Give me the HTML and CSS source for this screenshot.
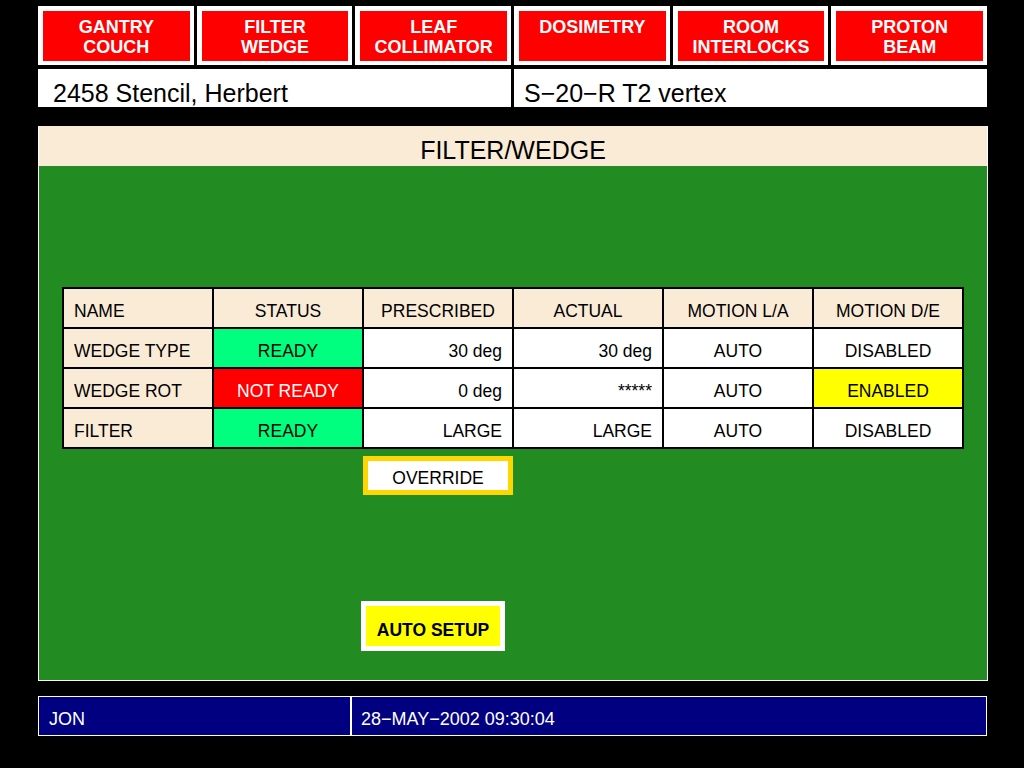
FILE: index.html
```html
<!DOCTYPE html>
<html lang="en">
<head>
  <meta charset="UTF-8" />
  <title>Filter/Wedge</title>
  <link rel="stylesheet" href="styles.css">
</head>
<body>
  <div class="screen">

    <!-- subsystem buttons -->
    <div class="nav">
      <a href="#" class="nav-btn"><span>GANTRY<br>COUCH</span></a>
      <a href="#" class="nav-btn"><span>FILTER<br>WEDGE</span></a>
      <a href="#" class="nav-btn"><span>LEAF<br>COLLIMATOR</span></a>
      <a href="#" class="nav-btn"><span>DOSIMETRY</span></a>
      <a href="#" class="nav-btn"><span>ROOM<br>INTERLOCKS</span></a>
      <a href="#" class="nav-btn"><span>PROTON<br>BEAM</span></a>
    </div>

    <!-- patient / field -->
    <div class="patient">
      <div class="patient-name">2458 Stencil, Herbert</div>
      <div class="patient-field">S−20−R T2 vertex</div>
    </div>

    <!-- main panel -->
    <div class="panel">
      <div class="panel-title">FILTER/WEDGE</div>
      <div class="panel-body">
        <table class="status-table">
          <tr class="head">
            <td class="name">NAME</td>
            <td>STATUS</td>
            <td>PRESCRIBED</td>
            <td>ACTUAL</td>
            <td>MOTION L/A</td>
            <td>MOTION D/E</td>
          </tr>
          <tr>
            <td class="name">WEDGE TYPE</td>
            <td class="ready">READY</td>
            <td class="num">30 deg</td>
            <td class="num">30 deg</td>
            <td>AUTO</td>
            <td>DISABLED</td>
          </tr>
          <tr>
            <td class="name">WEDGE ROT</td>
            <td class="not-ready">NOT READY</td>
            <td class="num">0 deg</td>
            <td class="num">*****</td>
            <td>AUTO</td>
            <td class="enabled">ENABLED</td>
          </tr>
          <tr>
            <td class="name">FILTER</td>
            <td class="ready">READY</td>
            <td class="num">LARGE</td>
            <td class="num">LARGE</td>
            <td>AUTO</td>
            <td>DISABLED</td>
          </tr>
        </table>

        <div class="actions">
          <button class="override">OVERRIDE</button>
          <button class="auto-setup">AUTO SETUP</button>
        </div>
      </div>
    </div>

    <!-- status bar -->
    <div class="footer">
      <div class="footer-user">JON</div>
      <div class="footer-time">28−MAY−2002 09:30:04</div>
    </div>

  </div>
</body>
</html>
```

FILE: styles.css
```css
/* Reset */
* {
  margin: 0;
  padding: 0;
  box-sizing: border-box;
}

body {
  background-color: #000;
  font-family: 'Liberation Sans', Arial, Helvetica, sans-serif;
  color: #000;
  width: 1024px;
  height: 768px;
  overflow: hidden;
}

.screen {
  width: 950px;
  margin-left: 38px;
  padding-top: 6px;
  display: flex;
  flex-direction: column;
}

/* subsystem buttons */
.nav {
  display: grid;
  grid-template-columns: repeat(6, 1fr);
  gap: 3px;
  width: 949px;
  height: 59px;
}

.nav-btn {
  display: flex;
  justify-content: center;
  background-color: #ff0000;
  border: solid #fff;
  border-width: 5px 4px 4px 5px;
  color: #fff;
  text-decoration: none;
  font-weight: bold;
  font-size: 18px;
  line-height: 20px;
  text-align: center;
  padding-top: 6px;
}

/* patient row */
.patient {
  display: flex;
  gap: 3px;
  margin-top: 4px;
  width: 949px;
  height: 38px;
}

.patient-name,
.patient-field {
  background-color: #fff;
  font-size: 25px;
  line-height: 38px;
  padding-top: 5px;
}

.patient-name {
  width: 473px;
  padding-left: 15px;
}

.patient-field {
  flex: 1;
  padding-left: 10px;
}

/* main panel */
.panel {
  margin-top: 19px;
  border: 1px solid #fff;
  border-top: none;
  height: 555px;
  display: flex;
  flex-direction: column;
}

.panel-title {
  background-color: #faebd7;
  height: 40px;
  text-align: center;
  font-size: 25px;
  line-height: 48px;
}

.panel-body {
  flex: 1;
  background-color: #228b22;
  padding: 121px 0 0 23px;
}

.status-table {
  border-collapse: collapse;
  table-layout: fixed;
  width: 902px;
  font-size: 17.5px;
}

.status-table td {
  width: 150px;
  height: 40px;
  border: 2px solid #000;
  background-color: #fff;
  text-align: center;
  padding: 6px 10px 0;
  white-space: nowrap;
}

.status-table .head td,
.status-table td.name {
  background-color: #faebd7;
}

.status-table td.name {
  text-align: left;
}

.status-table td.num {
  text-align: right;
}

.status-table .head td.num {
  text-align: center;
}

.status-table td.ready { background-color: #00ff7f; }
.status-table td.not-ready { background-color: #ff0000; color: #fff; }
.status-table td.enabled { background-color: #ffff00; }

/* buttons under the table */
.actions {
  display: flex;
  flex-direction: column;
  align-items: flex-start;
  gap: 106px;
  padding-left: 301px;
  margin-top: 7px;
}

.actions button {
  font-family: inherit;
  font-size: 17.5px;
  color: #000;
  cursor: pointer;
}

.override {
  width: 150px;
  height: 39px;
  background-color: #fff;
  border: 5px solid #ffd700;
  padding-top: 6px;
}

.auto-setup {
  width: 144px;
  height: 50px;
  margin-left: -2px;
  background-color: #ffff00;
  border: 5px solid #fff;
  font-weight: bold;
  padding-top: 8px;
}

/* status bar */
.footer {
  margin-top: 15px;
  width: 949px;
  height: 40px;
  display: flex;
  background-color: #000080;
  border: 1px solid #fff;
  color: #fff;
  font-size: 18px;
}

.footer-user {
  width: 313px;
  border-right: 2px solid #fff;
  padding: 12px 0 0 10px;
}

.footer-time {
  flex: 1;
  padding: 12px 0 0 9px;
}
```
